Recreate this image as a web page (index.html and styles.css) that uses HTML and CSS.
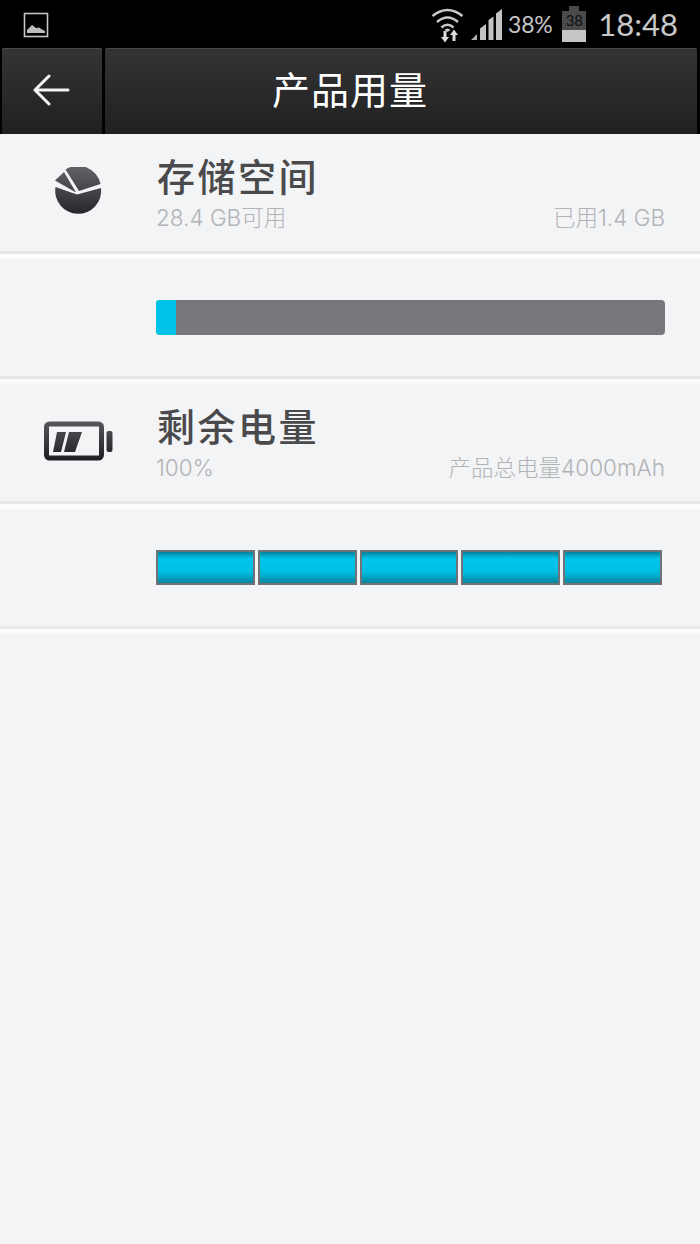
FILE: index.html
```html
<!DOCTYPE html>
<html lang="zh-CN">
<head>
  <meta charset="UTF-8">
  <meta name="viewport" content="width=device-width, initial-scale=1.0">
  <title>产品用量</title>
  <link rel="stylesheet" href="styles.css">
</head>
<body>
  <header class="status-bar">
    <svg class="status-picture" width="26" height="26" viewBox="0 0 26 26">
      <rect x="1.500" y="1.500" width="23" height="23" fill="#000" stroke="#c4c4c4" stroke-width="1.6"/>
      <path d="M4 21 V18 L9 13 L13 16 L16 15.500 L19 17.500 L22 19 V21 Z" fill="#bdbdbd"/>
    </svg>
    <div class="status-right">
      <svg class="status-wifi" width="34" height="36" viewBox="0 0 34 36">
        <path d="M1.500 9 Q16.500 -3 31.500 9" fill="none" stroke="#c8c8c8" stroke-width="2.600"/>
        <path d="M6 15 Q16.500 6 27 15" fill="none" stroke="#c8c8c8" stroke-width="2.600"/>
        <path d="M10.500 20.500 Q16.500 15 22.500 20.500" fill="none" stroke="#c8c8c8" stroke-width="2.600"/>
        <path d="M13.500 23 Q16.500 20 19.500 23 L16.500 25 Z" fill="#c8c8c8"/>
        <path d="M12.500 24 H15.500 V30 H18 L14 35.500 L10 30 H12.500 Z M21.500 34 H24.500 V28 H27 L23 22.500 L19 28 H21.500 Z" fill="#dcdcdc"/>
      </svg>
      <svg class="status-signal" width="32" height="32" viewBox="0 0 32 32">
        <path d="M0 31 L6 25 V31 Z" fill="#b0b0b0"/>
        <path d="M9 31 V19.500 L15 15 V31 Z M17.500 31 V11 L22.500 7.500 V31 Z M25 31 V4.500 L31 0 V31 Z" fill="#c4c4c4"/>
      </svg>
      <span class="status-percent">38%</span>
      <div class="status-battery">
        <div class="status-battery-cap"></div>
        <div class="status-battery-empty">38</div>
        <div class="status-battery-full"></div>
      </div>
      <span class="status-time">18:48</span>
    </div>
  </header>

  <nav class="action-bar">
    <button class="back-button" aria-label="返回">
      <svg width="38" height="32" viewBox="0 0 38 32">
        <path d="M36 16 H3 M17 2 L3 16 L17 30" fill="none" stroke="#f2f2f2" stroke-width="3" stroke-linecap="round" stroke-linejoin="round"/>
      </svg>
    </button>
    <div class="action-title"><h1>产品用量</h1></div>
  </nav>

  <main>
    <section class="row row-head">
      <div class="row-icon row-icon-pie">
        <svg width="48" height="50" viewBox="0 0 48 50">
          <defs>
            <linearGradient id="darkFade" gradientUnits="userSpaceOnUse" x1="0" y1="0" x2="0" y2="50">
              <stop offset="0" stop-color="#626367"/>
              <stop offset="1" stop-color="#222327"/>
            </linearGradient>
            <linearGradient id="batteryFade" gradientUnits="userSpaceOnUse" x1="0" y1="0" x2="0" y2="40">
              <stop offset="0" stop-color="#58595d"/>
              <stop offset="1" stop-color="#1c1d21"/>
            </linearGradient>
          </defs>
          <path d="M1.500 20 L23 27.500 L47 21 A23 23 0 1 1 1.500 20 Z" fill="url(#darkFade)"/>
          <path d="M1 13.500 L10 5 L22 25.500 Z" fill="url(#darkFade)"/>
          <path d="M11.500 2.500 A23 23 0 0 1 46.500 17 L25 24 Z" fill="url(#darkFade)"/>
        </svg>
      </div>
      <div class="row-body">
        <h2 class="row-title">存储空间</h2>
        <div class="row-meta"><span>28.4 GB可用</span><span>已用1.4 GB</span></div>
      </div>
    </section>

    <section class="row row-bar">
      <div class="storage-bar"><div class="storage-used" style="width: 4%"></div></div>
    </section>

    <section class="row row-head">
      <div class="row-icon">
        <svg width="70" height="40" viewBox="0 0 70 40">
          <rect x="3.500" y="3" width="55" height="34" rx="3" fill="none" stroke="url(#batteryFade)" stroke-width="5"/>
          <path d="M14 11 H23 L18 31 H10 Z M26 11 H39 L32 31 H21 Z" fill="url(#batteryFade)"/>
          <rect x="63.500" y="10" width="6" height="21" rx="2" fill="url(#batteryFade)"/>
        </svg>
      </div>
      <div class="row-body">
        <h2 class="row-title">剩余电量</h2>
        <div class="row-meta"><span>100%</span><span>产品总电量4000mAh</span></div>
      </div>
    </section>

    <section class="row row-bar">
      <div class="cells">
        <div class="cell"></div>
        <div class="cell"></div>
        <div class="cell"></div>
        <div class="cell"></div>
        <div class="cell"></div>
      </div>
    </section>
  </main>
</body>
</html>
```

FILE: styles.css
```css
* {
  box-sizing: border-box;
}
html, body {
  margin: 0;
  height: 100%;
}
body {
  background-color: #f2f4f6;
  font-family: "Noto Sans CJK SC", "Noto Sans", sans-serif;
  overflow: hidden;
}
.status-bar {
  height: 48px;
  background-color: #000;
  display: flex;
  align-items: center;
  justify-content: space-between;
  padding: 0 22px 0 23px;
}
.status-picture {
  margin-top: 2px;
}
.status-right {
  display: flex;
  align-items: center;
}
.status-wifi {
  margin-right: 6px;
  margin-top: 2px;
}
.status-signal {
  margin-right: 5px;
  margin-top: 2px;
}
.status-percent {
  font-family: "Lato", sans-serif;
  font-size: 23px;
  color: #c4c4c4;
  margin-right: 10px;
  letter-spacing: -0.3px;
}
.status-battery {
  width: 24px;
  height: 36px;
  margin-right: 12px;
  display: flex;
  flex-direction: column;
  align-items: center;
}
.status-battery-cap {
  width: 10px;
  height: 5px;
  background-color: #4a4a4a;
}
.status-battery-empty {
  width: 100%;
  height: 19px;
  background-color: #4a4a4a;
  color: #111;
  font-family: "Lato", sans-serif;
  font-size: 15px;
  line-height: 19px;
  text-align: center;
}
.status-battery-full {
  width: 100%;
  flex: 1;
  background-color: #c6c6c6;
}
.status-time {
  font-family: "Lato", sans-serif;
  font-size: 31px;
  color: #c8c8c8;
}
.action-bar {
  height: 86px;
  background-color: #000;
  display: flex;
  gap: 3px;
  padding: 0 3px 0 2px;
}
.back-button {
  width: 100px;
  border: none;
  border-top: 1px solid #47484a;
  padding: 0 2px 3px 0;
  border-radius: 2px 2px 0 0;
  background-image: linear-gradient(#343436, #202021);
  display: flex;
  align-items: center;
  justify-content: center;
}
.action-title {
  flex: 1;
  border-top: 1px solid #47484a;
  border-radius: 2px 2px 0 0;
  background-image: linear-gradient(#343436, #202021);
  display: flex;
  align-items: center;
  justify-content: center;
  padding: 0 102px 8px 0;
}
.action-title h1 {
  margin: 0;
  color: #fff;
  font-size: 38px;
  font-weight: 400;
  letter-spacing: 1px;
  line-height: 1;
}
.row {
  display: flex;
  height: 125px;
  border-bottom: 5px solid #fafbfb;
  position: relative;
}
.row::after {
  content: "";
  position: absolute;
  left: 0;
  right: 0;
  bottom: 0;
  height: 3px;
  background-color: #e6e7e8;
}
.row-bar {
  padding: 41px 35px 0 156px;
}
.row-icon {
  width: 156px;
  flex: none;
  display: flex;
  justify-content: center;
  align-items: center;
  padding-bottom: 6px;
}
.row-icon-pie {
  padding-bottom: 4px;
}
.row-body {
  flex: 1;
  padding: 16px 35px 0 0;
}
.row-title {
  margin: 0 0 3px;
  padding-left: 1px;
  font-size: 38px;
  font-weight: 500;
  line-height: 50px;
  letter-spacing: 2.5px;
  color: #4a4a4c;
}
.row-meta {
  display: flex;
  justify-content: space-between;
  font-family: "Inter", "Noto Sans CJK SC", sans-serif;
  font-weight: 300;
  font-size: 22.5px;
  line-height: 30px;
  color: #b2b3b5;
}
.storage-bar {
  width: 100%;
  height: 35px;
  background-color: #77787c;
  border-radius: 4px;
  overflow: hidden;
}
.storage-used {
  height: 100%;
  background-color: #00c3ea;
}
.cells {
  display: flex;
  gap: 3px;
  height: 35px;
  width: 506px;
}
.cell {
  flex: 1;
  border: 2px solid #6f7276;
  background-image: linear-gradient(#04829c, #00c6ec 22%, #00bde2 65%, #03869f);
}
```
